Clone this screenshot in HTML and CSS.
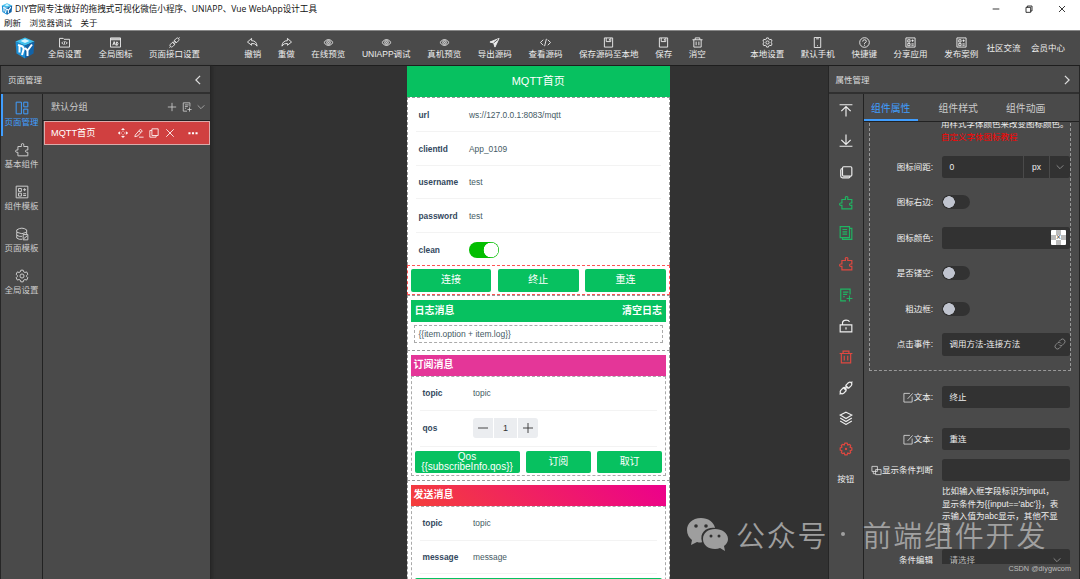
FILE: index.html
```html
<!DOCTYPE html>
<html lang="zh-CN">
<head>
    <meta charset="UTF-8">
    <title>DIY官网可视化设计工具</title>
    <link rel="stylesheet" href="styles.css">
</head>
<body>

<svg class="sprite">
    <symbol id="i-logo" viewBox="0 0 42 44">
        <path d="M21 1 40 9 21 17 2 9z" fill="#3fc0ee"/>
        <path d="M2 9 21 17V43L4 33z" fill="#1b8fd6"/>
        <path d="M40 9 21 17V43L38 33z" fill="#1263a8"/>
        <path d="M7 16l9 3q4 3 1 10l-2 7M10 17v14M21 22l5 5 9-12M26 27v11" fill="none" stroke="#fff" stroke-width="4"/>
        <path d="M12 8l9-4 9 4-9 4z" fill="#d9f4ff"/>
    </symbol>
    <symbol id="i-code-win" viewBox="0 0 24 24"><path d="M1 3h8l2 2h12v17H1zM9 10l-3 3 3 3M15 10l3 3-3 3M13 9l-2 8"/></symbol>
    <symbol id="i-ad" viewBox="0 0 24 24"><path d="M1 2h22v20H1zM1 4h22M1 6h22M6 18l3-8 3 8M7 15h4M14 18v-7h2q3 3 0 7z"/></symbol>
    <symbol id="i-link" viewBox="0 0 24 24"><path d="M12 7l4-4q3-2 5 0t0 5l-4 4q-2 1-4-1t-1-4zM11 12q-2-2-4 0l-4 4q-2 3 0 5t5 0l4-4q1-3-1-5zM1 23l2-2M21 3l2-2M8 12l4 4M12 8l4 4"/></symbol>
    <symbol id="i-undo" viewBox="0 0 24 24"><path d="M10 3 1 11l9 7v-4q8-1 12 6-1-12-12-12z"/></symbol>
    <symbol id="i-redo" viewBox="0 0 24 24"><path d="M14 3l9 8-9 7v-4Q6 13 2 20 3 8 14 8z"/></symbol>
    <symbol id="i-eye" viewBox="0 0 24 24"><path d="M2 12q10-13 20 0-10 13-20 0z"/><circle cx="12" cy="12" r="4"/><circle cx="12" cy="12" r="1"/></symbol>
    <symbol id="i-send" viewBox="0 0 24 24"><path d="M22 3 2 11l8 2 3 9z" fill="currentColor"/><path d="M20 5 10 13" stroke="#4a4a4a"/></symbol>
    <symbol id="i-code" viewBox="0 0 24 24"><path d="M7 6l-6 6 6 6M17 6l6 6-6 6M14 4l-4 16"/></symbol>
    <symbol id="i-save" viewBox="0 0 24 24"><path d="M3 2h18v20H3zM7 2v8h10V2M14 4v4"/></symbol>
    <symbol id="i-trash" viewBox="0 0 24 24"><path d="M1 6h22M7 6V2h10v4M4 6v16h16V6M9 10v8M15 10v8"/></symbol>
    <symbol id="i-gear" viewBox="0 0 24 24"><path d="M10 2h4l1 3 2 1 3-1 2 4-2 2v2l2 2-2 4-3-1-2 1-1 3h-4l-1-3-2-1-3 1-2-4 2-2v-2L2 9l2-4 3 1 2-1z"/><circle cx="12" cy="12" r="3.5"/></symbol>
    <symbol id="i-cog" viewBox="0 0 24 24"><path d="M10 2h4l1 3 3-1 2 2-1 3 3 1v4l-3 1 1 3-2 2-3-1-1 3h-4l-1-3-3 1-2-2 1-3-3-1v-4l3-1-1-3 2-2 3 1z"/><circle cx="12" cy="12" r="1" fill="currentColor"/></symbol>
    <symbol id="i-phone" viewBox="0 0 24 24"><path d="M5 1h14v22H5zM9 4h6M11 19h2"/></symbol>
    <symbol id="i-help" viewBox="0 0 24 24"><circle cx="12" cy="12" r="10.5"/><path d="M8 10q0-4 4-4t4 3.500q0 2-4 4v2M12 17v2"/></symbol>
    <symbol id="i-tpl" viewBox="0 0 24 24"><path d="M2 2h20v20H2zM6 6h5v5H6zM6 14h5v5H6zM14 8h5M16.500 5.500v5M14 15h5M14 18h5"/></symbol>
    <symbol id="i-layout" viewBox="0 0 24 24"><path d="M2 2h9v20H2zM15 2h7v8h-7zM15 14h7v8h-7z"/></symbol>
    <symbol id="i-puzzle" viewBox="0 0 24 24"><path d="M5 6h6V4q-1-3 2-3t2 3v2h7v6h-2q-2 0-2 2t2 2h2v6H5v-6H3q-2 0-2-2t2-2h2z"/></symbol>
    <symbol id="i-db" viewBox="0 0 24 24"><path d="M3 5q9-6 17 0v4q-8 5-17 0zM3 9v5q4 3 9 2M20 9v4M3 14v5q4 3 9 2"/><path d="M14 13h8v9h-8zM15 20l6-5" /></symbol>
    <symbol id="i-plus" viewBox="0 0 24 24"><path d="M12 2v20M2 12h20"/></symbol>
    <symbol id="i-minus" viewBox="0 0 24 24"><path d="M2 12h20"/></symbol>
    <symbol id="i-docadd" viewBox="0 0 24 24"><path d="M19 11V2H3v20h9M7 7h9M7 11h7M7 15h3M18 13v10M13 18h10"/></symbol>
    <symbol id="i-down" viewBox="0 0 24 24"><path d="M2 7l10 10L22 7"/></symbol>
    <symbol id="i-left" viewBox="0 0 24 24"><path d="M17 2 7 12l10 10"/></symbol>
    <symbol id="i-right" viewBox="0 0 24 24"><path d="M7 2l10 10L7 22"/></symbol>
    <symbol id="i-move" viewBox="0 0 24 24"><path d="M9 4l3-3 3 3zM9 20l3 3 3-3zM4 9l-3 3 3 3zM20 9l3 3-3 3z" fill="currentColor"/><path d="M12 7v2M12 15v2M7 12h2M15 12h2"/></symbol>
    <symbol id="i-edit" viewBox="0 0 24 24"><path d="M3 17 15 3l5 4L9 19l-7 2zM12 7l5 4M12 22h11"/></symbol>
    <symbol id="i-copy" viewBox="0 0 24 24"><path d="M7 2h15v16H7zM7 6H2v16h15v-4"/></symbol>
    <symbol id="i-close" viewBox="0 0 24 24"><path d="M3 3l18 18M21 3 3 21"/></symbol>
    <symbol id="i-more" viewBox="0 0 24 24"><path d="M1 10h5v5H1zM9.500 10h5v5h-5zM18 10h5v5h-5z" fill="currentColor" stroke="none"/></symbol>
    <symbol id="i-top" viewBox="0 0 24 24"><path d="M1 3h22M12 23V6M4 14l8-8 8 8"/></symbol>
    <symbol id="i-bottom" viewBox="0 0 24 24"><path d="M1 21h22M12 1v17M4 10l8 8 8-8"/></symbol>
    <symbol id="i-dup" viewBox="0 0 24 24"><path d="M8 3h12q2 0 2 2v12q0 2-2 2H8q-2 0-2-2V5q0-2 2-2zM6 6q-3 0-3 3v10q0 3 3 3h11q2 0 2-3"/></symbol>
    <symbol id="i-doc" viewBox="0 0 24 24"><path d="M2 1h16v19H2zM18 4h4v19H6v-3M6 6h8M6 10h8M6 14h8"/></symbol>
    <symbol id="i-lock" viewBox="0 0 24 24"><path d="M2 10h20v12H2zM6 10V6q1-4 6-4 5 0 6 3M12 14v4"/></symbol>
    <symbol id="i-layers" viewBox="0 0 24 24"><path d="M12 2l10 5-10 6L2 7zM2 12l10 6 10-6M2 17l10 6 10-6"/></symbol>
    <symbol id="i-write" viewBox="0 0 24 24"><path d="M15 3H2v19h18V10M10 15 21 3"/></symbol>
    <symbol id="i-cond" viewBox="0 0 24 24"><path d="M2 3h12v11H2zM10 10h12v11H10zM5 14v5h5"/></symbol>
    <symbol id="i-chain" viewBox="0 0 24 24"><path d="M10 7l4-4q4-3 7 1t-1 7l-4 4q-4 2-6-2M14 17l-4 4q-4 3-7-1t1-7l4-4q4-2 6 2"/></symbol>
    <symbol id="i-restore" viewBox="0 0 24 24"><path d="M3 7h14v15H3zM7 7V3h14v15h-4"/></symbol>
    <symbol id="i-wechat" viewBox="0 0 42 34">
        <path d="M15 1C6 1 1 7 1 13q0 6 5 10l-1 5 6-3q4 1 5 0C13 15 21 10 29 11 28 5 22 1 15 1z" fill="currentColor" stroke="none"/>
        <path d="M29 12c-7 0-12 4-12 10s5 10 12 10q3 0 5-1l5 3-1-5q4-3 4-7c0-6-6-10-13-10z" fill="currentColor" stroke="none"/>
        <g fill="#333" stroke="none"><circle cx="10" cy="9" r="1.800"/><circle cx="20" cy="9" r="1.800"/><circle cx="25" cy="19" r="1.500"/><circle cx="33" cy="19" r="1.500"/></g>
    </symbol>
</svg>

<div class="titlebar">
    <svg class="app-icon"><use href="#i-logo"/></svg>
    <span class="title">DIY官网专注做好的拖拽式可视化微信小程序、UNIAPP、Vue WebApp设计工具</span>
    <div class="win-btns">
        <svg><use href="#i-minus"/></svg>
        <svg><use href="#i-restore"/></svg>
        <svg><use href="#i-close"/></svg>
    </div>
</div>
<div class="menubar"><span>刷新</span><span>浏览器调试</span><span>关于</span></div>

<div class="toolbar">
    <svg class="logo"><use href="#i-logo"/></svg>
    <div class="tools tools-left">
        <div class="tool"><svg><use href="#i-code-win"/></svg>全局设置</div>
        <div class="tool"><svg><use href="#i-ad"/></svg>全局图标</div>
        <div class="tool"><svg><use href="#i-link"/></svg>页面接口设置</div>
    </div>
    <div class="tools tools-mid">
        <div class="tool"><svg><use href="#i-undo"/></svg>撤销</div>
        <div class="tool"><svg><use href="#i-redo"/></svg>重做</div>
        <div class="tool"><svg><use href="#i-eye"/></svg>在线预览</div>
        <div class="tool"><svg><use href="#i-eye"/></svg>UNIAPP调试</div>
        <div class="tool"><svg><use href="#i-eye"/></svg>真机预览</div>
        <div class="tool"><svg><use href="#i-send"/></svg>导出源码</div>
        <div class="tool"><svg><use href="#i-code"/></svg>查看源码</div>
        <div class="tool"><svg><use href="#i-save"/></svg>保存源码至本地</div>
        <div class="tool"><svg><use href="#i-save"/></svg>保存</div>
        <div class="tool"><svg><use href="#i-trash"/></svg>消空</div>
    </div>
    <div class="tools tools-right">
        <div class="tool"><svg><use href="#i-gear"/></svg>本地设置</div>
        <div class="tool"><svg><use href="#i-phone"/></svg>默认手机</div>
        <div class="tool"><svg><use href="#i-help"/></svg>快捷键</div>
        <div class="tool"><svg><use href="#i-tpl"/></svg>分享应用</div>
        <div class="tool"><svg><use href="#i-tpl"/></svg>发布案例</div>
        <div class="tool-text">社区交流</div>
        <div class="tool-text">会员中心</div>
    </div>
</div>

<div class="main">
    <div class="left-panel">
        <div class="panel-head">页面管理<svg><use href="#i-left"/></svg></div>
        <div class="panel-body">
            <div class="side-nav">
                <div class="nav-item active"><svg><use href="#i-layout"/></svg>页面管理</div>
                <div class="nav-item"><svg><use href="#i-puzzle"/></svg>基本组件</div>
                <div class="nav-item"><svg><use href="#i-tpl"/></svg>组件模板</div>
                <div class="nav-item"><svg><use href="#i-db"/></svg>页面模板</div>
                <div class="nav-item"><svg><use href="#i-gear"/></svg>全局设置</div>
            </div>
            <div class="pages">
                <div class="group">
                    <span>默认分组</span>
                    <svg><use href="#i-plus"/></svg>
                    <svg><use href="#i-docadd"/></svg>
                    <svg class="small"><use href="#i-down"/></svg>
                </div>
                <div class="page-row">
                    <span>MQTT首页</span>
                    <svg><use href="#i-move"/></svg>
                    <svg><use href="#i-edit"/></svg>
                    <svg><use href="#i-copy"/></svg>
                    <svg><use href="#i-close"/></svg>
                    <svg class="more"><use href="#i-more"/></svg>
                </div>
            </div>
        </div>
    </div>

    <div class="canvas">
        <div class="phone">
            <div class="phone-head">MQTT首页</div>
            <div class="block form">
                <div class="cell"><b>url</b><span>ws://127.0.0.1:8083/mqtt</span></div>
                <div class="cell"><b>clientId</b><span>App_0109</span></div>
                <div class="cell"><b>username</b><span>test</span></div>
                <div class="cell"><b>password</b><span>test</span></div>
                <div class="cell"><b>clean</b><i class="switch-on"></i></div>
            </div>
            <div class="block btn-row selected">
                <div class="btn">连接</div>
                <div class="btn">终止</div>
                <div class="btn">重连</div>
            </div>
            <div class="block log">
                <div class="bar green"><span>日志消息</span><span>清空日志</span></div>
                <div class="log-item">{{item.option + item.log}}</div>
            </div>
            <div class="block section">
                <div class="bar pink">订阅消息</div>
                <div class="inner">
                    <div class="cell"><b>topic</b><span>topic</span></div>
                    <div class="cell qos"><b>qos</b>
                        <div class="stepper">
                            <div><svg><use href="#i-minus"/></svg></div>
                            <div>1</div>
                            <div><svg><use href="#i-plus"/></svg></div>
                        </div>
                    </div>
                    <div class="btn-row">
                        <div class="btn wide">Qos<br>{{subscribeInfo.qos}}</div>
                        <div class="btn">订阅</div>
                        <div class="btn">取订</div>
                    </div>
                </div>
            </div>
            <div class="block section">
                <div class="bar gradient">发送消息</div>
                <div class="inner">
                    <div class="cell"><b>topic</b><span>topic</span></div>
                    <div class="cell"><b>message</b><span>message</span></div>
                    <div class="btn-row"><div class="btn"></div></div>
                </div>
            </div>
        </div>
    </div>

    <div class="right-panel">
        <div class="panel-head">属性管理<svg><use href="#i-right"/></svg></div>
        <div class="panel-body">
            <div class="actions">
                <svg><use href="#i-top"/></svg>
                <svg><use href="#i-bottom"/></svg>
                <svg><use href="#i-dup"/></svg>
                <svg class="ok"><use href="#i-puzzle"/></svg>
                <svg class="ok"><use href="#i-doc"/></svg>
                <svg class="danger"><use href="#i-puzzle"/></svg>
                <svg class="ok"><use href="#i-docadd"/></svg>
                <svg><use href="#i-lock"/></svg>
                <svg class="danger"><use href="#i-trash"/></svg>
                <svg><use href="#i-link"/></svg>
                <svg><use href="#i-layers"/></svg>
                <svg class="danger"><use href="#i-cog"/></svg>
                <span>按钮</span>
            </div>
            <div class="props">
                <div class="tabs">
                    <div class="tab active">组件属性</div>
                    <div class="tab">组件样式</div>
                    <div class="tab">组件动画</div>
                </div>
                <div class="scroll">
                    <div class="fieldset">
                        <div class="tip">用样式字体颜色来改变图标颜色。<br><a>自定义字体图标教程</a></div>
                        <div class="field"><label>图标间距:</label>
                            <div class="input group-input"><span>0</span><span class="unit">px</span><span class="arrow"><svg><use href="#i-down"/></svg></span></div>
                        </div>
                        <div class="field"><label>图标右边:</label><i class="switch"></i></div>
                        <div class="field"><label>图标颜色:</label><div class="input"><span class="color">×</span></div></div>
                        <div class="field"><label>是否镂空:</label><i class="switch"></i></div>
                        <div class="field"><label>粗边框:</label><i class="switch"></i></div>
                        <div class="field"><label>点击事件:</label><div class="input">调用方法-连接方法<svg><use href="#i-chain"/></svg></div></div>
                    </div>
                    <div class="field text-field"><label><svg><use href="#i-write"/></svg>文本:</label><div class="input">终止</div></div>
                    <div class="field text-field"><label><svg><use href="#i-write"/></svg>文本:</label><div class="input">重连</div></div>
                    <div class="field cond"><label><svg><use href="#i-cond"/></svg>显示条件判断</label><div class="input"></div></div>
                    <div class="help">比如输入框字段标识为input，<br>显示条件为{{input=='abc'}}，表<br>示输入值为abc显示，其他不显<br>示</div>
                    <div class="field last"><label>条件编辑</label><div class="input muted">请选择<svg><use href="#i-down"/></svg></div></div>
                </div>
            </div>
        </div>
    </div>
</div>

<div class="watermark"><svg><use href="#i-wechat"/></svg><span>公众号</span><i></i><span>前端组件开发</span></div>
<div class="credit">CSDN @diygwcom</div>

</body>
</html>
```

FILE: styles.css
```css
* {
    box-sizing: border-box;
}
body {
    margin: 0;
    width: 1080px;
    height: 579px;
    overflow: hidden;
    position: relative;
    display: flex;
    flex-direction: column;
    font-family: "Liberation Sans", "Noto Sans CJK SC", sans-serif;
    font-size: 8.5px;
    line-height: 12px;
    color: #eee;
    background: #323232;
    white-space: nowrap;
}
svg {
    flex: none;
    width: 12px;
    height: 12px;
    fill: none;
    stroke: currentColor;
    stroke-width: 2;
}
svg.sprite {
    position: absolute;
    width: 0;
    height: 0;
}
.titlebar {
    height: 17px;
    background: #fff;
    color: #111;
    display: flex;
    align-items: center;
    padding: 0 14px 0 1px;
    font-family: "Open Sans", "Noto Sans CJK SC", sans-serif;
    font-size: 8.6px;
}
.app-icon, .logo {
    stroke: none;
}
.app-icon {
    margin-right: 2px;
}
.win-btns {
    margin-left: auto;
    display: flex;
    gap: 25px;
}
.win-btns svg {
    width: 8px;
    height: 8px;
    stroke-width: 2.5;
}
.menubar {
    height: 14px;
    background: #fff;
    color: #222;
    border-bottom: 1px solid #888;
    display: flex;
    gap: 8.5px;
    padding-left: 4px;
}
.toolbar {
    height: 35px;
    background: #4a4a4a;
    border-bottom: 1px solid #1e1e1e;
    display: flex;
}
.logo {
    width: 22px;
    height: 22px;
    margin: 6px 3.5px 0 14px;
}
.tools {
    display: flex;
}
.tools-mid {
    margin-left: 27.5px;
}
.tools-right {
    margin-left: auto;
    padding-right: 10px;
}
.tool {
    padding: 6px 8.3px 0;
    display: flex;
    flex-direction: column;
    align-items: center;
}
.tool svg {
    width: 11px;
    height: 11px;
}
.tool-text {
    padding: 11px 5px 0 0;
}
.tool-text:last-child {
    padding-left: 5.5px;
}
.main {
    flex: 1;
    min-height: 0;
    display: flex;
}
.left-panel {
    width: 211px;
    background: #4a4a4a;
    border-left: 1px solid #262626;
    border-right: 1px solid #262626;
    display: flex;
    flex-direction: column;
    box-shadow: 2px 0 2px #2a2a2a;
}
.panel-head {
    height: 28px;
    border-bottom: 2px solid #303030;
    display: flex;
    align-items: center;
    justify-content: space-between;
    padding: 1px 7px 0;
    color: #ddd;
}
.panel-head svg {
    width: 10px;
    height: 10px;
    stroke-width: 3;
}
.panel-body {
    flex: 1;
    min-height: 0;
    display: flex;
}
.side-nav {
    width: 42px;
    border-right: 1px solid #222;
    color: #ccc;
}
.nav-item {
    height: 42px;
    padding-top: 7px;
    display: flex;
    flex-direction: column;
    align-items: center;
    gap: 1px;
}
.nav-item svg {
    width: 14px;
    height: 14px;
    stroke-width: 1.7;
}
.nav-item.active {
    color: #409eff;
    box-shadow: inset 2px 0 #409eff;
}
.pages {
    flex: 1;
}
.group {
    height: 27px;
    border-bottom: 1px solid #222;
    display: flex;
    align-items: center;
    gap: 5px;
    padding: 0 5px 0 8px;
    font-size: 9.2px;
    color: #ccc;
}
.group span {
    margin-right: auto;
}
.group svg {
    width: 10px;
    height: 10px;
}
.group svg.small {
    width: 8px;
    height: 8px;
}
.page-row {
    height: 24px;
    margin-left: 1px;
    background: #d04040;
    border: 1px solid #dcaaaa;
    color: #fff;
    display: flex;
    align-items: center;
    gap: 5.500px;
    padding: 0 11px 0 6px;
    font-size: 9.2px;
}
.page-row span {
    margin-right: auto;
}
.page-row svg {
    width: 10px;
    height: 10px;
}
.page-row svg.more {
    margin-left: 8px;
}
.canvas {
    flex: 1;
    padding-left: 195.500px;
    overflow: hidden;
}
.phone {
    width: 263.500px;
    height: 520px;
    background: #fff;
    color: #455a64;
}
.phone-head {
    height: 31px;
    line-height: 31px;
    text-align: center;
    font-size: 11px;
    color: #fff;
    background: #07c160;
}
.block {
    border: 1px dashed #999;
}
.form {
    height: 168px;
    border-bottom: 0;
    padding: 0.8px 8px 0;
}
.cell {
    height: 33.5px;
    border-bottom: 1px solid #f3f3f3;
    display: flex;
    align-items: center;
    padding-left: 3px;
    font-size: 8.4px;
}
.cell:last-child {
    border-bottom: 0;
}
.cell b {
    width: 50.5px;
    color: #34495e;
}
.switch-on {
    width: 30px;
    height: 16px;
    border-radius: 8px;
    background: radial-gradient(circle at 22px 8px, #fff 7px, #04be02 7.6px);
}
.btn-row {
    display: flex;
    gap: 6.5px;
}
.btn {
    flex: 1;
    height: 22.5px;
    border-radius: 2px;
    background: #07c160;
    color: #fff;
    font-size: 10px;
    display: flex;
    align-items: center;
    justify-content: center;
    text-align: center;
}
.btn.wide {
    flex: 0 0 105px;
    line-height: 9.5px;
    font-size: 10px;
}
.selected {
    height: 30px;
    border-color: #f55;
    padding: 3px 3px 0;
}
.log {
    height: 55px;
    border-bottom: 0;
    padding: 4px 3px 0;
}
.bar {
    height: 21.5px;
    display: flex;
    align-items: center;
    justify-content: space-between;
    padding: 0 3px;
    color: #fff;
    font-size: 10px;
    font-weight: bold;
}
.green {
    background: #07c160;
    padding: 0 4px;
}
.pink {
    background: #e43698;
}
.gradient {
    background: linear-gradient(45deg, #f43f3b, #ec008c);
}
.log-item {
    height: 18px;
    margin: 3.5px 3px 0;
    border: 1px dashed #aaa;
    padding-left: 4px;
    line-height: 17px;
    font-size: 8.5px;
}
.section {
    height: 130px;
    border-bottom: 0;
    padding: 3.5px 3px 0;
}
.inner {
    height: 100px;
    border: 1px dashed #aaa;
    padding: 0 3px;
}
.inner .cell {
    margin: 0 5px;
}
.inner .cell.qos {
    height: 36px;
}
.inner .btn-row {
    margin-top: 4px;
}
.stepper {
    display: flex;
    gap: 1px;
    font-size: 9px;
}
.stepper div {
    width: 20px;
    height: 20px;
    background: #ebedf0;
    display: flex;
    align-items: center;
    justify-content: center;
    color: #333;
}
.stepper div:nth-child(2) {
    width: 23px;
}
.stepper div:first-child {
    border-radius: 3px 0 0 3px;
}
.stepper div:last-child {
    border-radius: 0 3px 3px 0;
}
.stepper svg {
    stroke-width: 1.8;
}
.right-panel {
    width: 252.500px;
    border-left: 1px solid #262626;
    border-right: 1px solid #262626;
    background: #4a4a4a;
    display: flex;
    flex-direction: column;
}
.actions {
    width: 36px;
    border-right: 1px solid #222;
    display: flex;
    flex-direction: column;
    align-items: center;
    gap: 16.850px;
    padding-top: 9px;
}
.actions svg {
    width: 14px;
    height: 14px;
}
.ok {
    color: #1fb562;
}
.danger {
    color: #e04840;
}
.props {
    flex: 1;
    display: flex;
    flex-direction: column;
}
.tabs {
    height: 28px;
    border-bottom: 1px solid #222;
    display: flex;
    gap: 14px;
    font-size: 9.9px;
    color: #ccc;
}
.tab {
    width: 53.5px;
    line-height: 29px;
    text-align: center;
}
.tab.active {
    color: #409eff;
    border-bottom: 2px solid #409eff;
}
.scroll {
    height: 442px;
    overflow: hidden;
    padding: 0 8px 0 5px;
}
.fieldset {
    height: 249px;
    border: 1px dashed #999;
    border-top: 0;
}
.tip {
    margin: -4px 0 0 71px;
    line-height: 12.5px;
}
.tip a {
    color: #f00;
}
.field {
    height: 35.500px;
    display: flex;
    align-items: center;
}
.field label {
    width: 63px;
    margin-right: 9px;
    display: flex;
    justify-content: flex-end;
    align-items: center;
}
.field label svg {
    width: 11px;
    height: 11px;
    stroke-width: 1.6;
}
.fieldset .field:nth-child(2) {
    margin-top: 6px;
}
.input {
    width: 128px;
    height: 22.5px;
    border-radius: 2.5px;
    background: #323232;
    flex: none;
    display: flex;
    align-items: center;
    padding: 0 4px 0 7.5px;
}
.input svg {
    margin-left: auto;
    color: #999;
    stroke-width: 1.6;
}
.group-input {
    padding-right: 0;
}
.group-input span {
    flex: 1;
}
.group-input .unit {
    flex: 0 0 27px;
    line-height: 22px;
    text-align: center;
    border-left: 1px solid #4a4a4a;
    border-right: 1px solid #4a4a4a;
}
.group-input .arrow {
    flex: 0 0 20px;
    display: flex;
    justify-content: center;
}
.arrow svg, .muted svg {
    width: 8px;
    height: 8px;
    margin: 0;
    stroke-width: 2.500;
}
.muted svg {
    margin: 0 5px 0 auto;
}
.switch {
    width: 28px;
    height: 14px;
    border-radius: 7px;
    background: radial-gradient(circle at 7px 7px, #c0c4cf 5.5px, #323232 6px);
}
.color {
    width: 15px;
    height: 15px;
    margin-left: auto;
    line-height: 15px;
    text-align: center;
    color: #555;
    border-radius: 1px;
    background: repeating-conic-gradient(#bbb 0 25%, #fff 0 50%) 0 0 / 10px 10px;
}
.text-field {
    height: 42px;
    margin-left: 1px;
}
.fieldset {
    height: 253px;
}
.fieldset + .text-field {
    margin-top: 5px;
}
.cond {
    height: 22px;
    margin: -1px 0 0 1px;
}
.help {
    margin: 4px 0 0 73px;
    line-height: 12.7px;
}
.last {
    height: 24px;
    margin: 12px 0 0 1px;
}
.muted {
    color: #bbb;
}
.watermark {
    position: absolute;
    left: 686px;
    top: 515px;
    display: flex;
    align-items: center;
    color: #aaa;
    font-family: "Noto Sans CJK SC", sans-serif;
    font-weight: 350;
    font-size: 29px;
    line-height: 38px;
    letter-spacing: 1.8px;
    opacity: 0.9;
}
.watermark svg {
    width: 42px;
    height: 34px;
    margin-right: 8px;
}
.watermark i {
    width: 4px;
    height: 4px;
    margin: 0 17px 0 13px;
    border-radius: 50%;
    background: #aaa;
}
.credit {
    position: absolute;
    right: 9px;
    top: 563px;
    font-size: 7.3px;
    color: #bbb;
}
```
